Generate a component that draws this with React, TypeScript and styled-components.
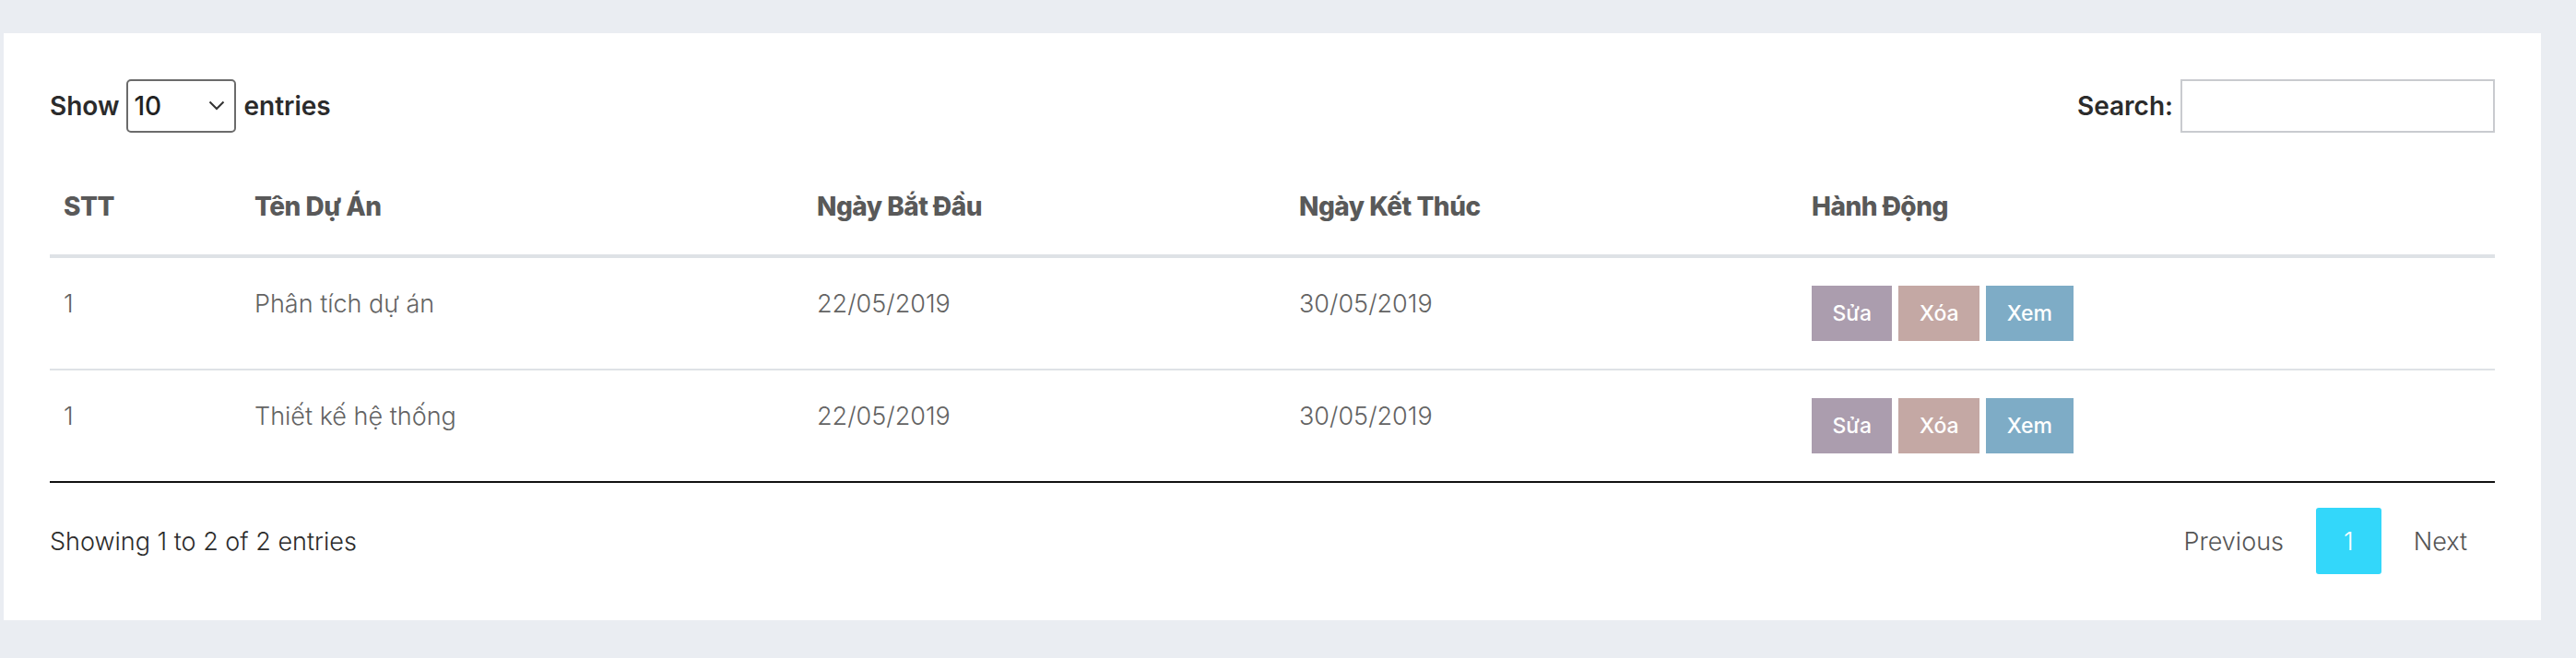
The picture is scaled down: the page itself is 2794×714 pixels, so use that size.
import React from "react";
import styled, { createGlobalStyle } from "styled-components";

const GlobalStyle = createGlobalStyle`
  html, body { margin: 0; padding: 0; background: #eaedf2; }
  body { font-family: Inter, "Noto Sans", sans-serif; }
  * { box-sizing: border-box; }
`;

const Page = styled.div`
  width: 2794px;
  height: 714px;
  padding: 36px 38px 41px 4px;
`;

const Panel = styled.div`
  background: #ffffff;
  height: 637px;
  padding: 50px;
  display: flex;
  flex-direction: column;
`;

const Controls = styled.div`
  display: flex;
  justify-content: space-between;
  align-items: center;
  height: 58px;
`;

const Label = styled.label`
  display: flex;
  align-items: center;
  gap: 8px;
  font-size: 28px;
  font-weight: 600;
  color: #2b2b2b;
`;

const SelectWrap = styled.div`
  position: relative;
  width: 119px;
  height: 58px;
`;

const Select = styled.select`
  appearance: none;
  width: 100%;
  height: 100%;
  border: 2px solid #6b6b6b;
  border-radius: 5px;
  background: #fff;
  font-family: Inter, sans-serif;
  font-size: 28px;
  font-weight: 500;
  color: #222;
  padding: 0 0 0 6px;
`;

const Chevron = styled.svg`
  position: absolute;
  right: 12px;
  top: 23px;
  pointer-events: none;
`;

const SearchInput = styled.input`
  width: 341px;
  height: 58px;
  border: 2px solid #c9cbcf;
  border-radius: 0;
  outline: none;
`;

const Table = styled.table`
  margin-top: 28px;
  width: 100%;
  border-collapse: collapse;
  table-layout: fixed;
  border-bottom: 2px solid #111;
`;

const Th = styled.th`
  text-align: left;
  padding: 30px 15px;
  line-height: 44px;
  font-size: 28px;
  font-weight: 800;
  color: #595959;
  border-bottom: 4px solid #dee2e6;
  vertical-align: bottom;
  letter-spacing: -0.5px;
`;

const Tr = styled.tr`
  & + & td { border-top: 2px solid #dee2e6; }
`;

const Td = styled.td`
  padding: 30px 15px;
  line-height: 40px;
  font-size: 27px;
  font-weight: 300;
  color: #636363;
  vertical-align: top;
`;

const Actions = styled.div`
  display: flex;
  gap: 7px;
`;

const ActionButton = styled.button<{ $bg: string }>`
  height: 60px;
  padding: 0 22.5px;
  border: none;
  border-radius: 0;
  background: ${(p) => p.$bg};
  color: #fff;
  font-family: Inter, sans-serif;
  font-size: 23px;
  font-weight: 500;
`;

const Footer = styled.div`
  margin-top: 27px;
  display: flex;
  justify-content: space-between;
  align-items: center;
  height: 72px;
`;

const Info = styled.div`
  font-size: 27px;
  font-weight: 300;
  color: #2b2b2b;
`;

const Pager = styled.div`
  display: flex;
  align-items: center;
`;

const PageLink = styled.span<{ $active?: boolean }>`
  display: flex;
  align-items: center;
  height: 72px;
  padding: ${(p) => (p.$active ? "0 30px" : "0 35px")};
  font-size: 27px;
  font-weight: 300;
  color: ${(p) => (p.$active ? "#fff" : "#555")};
  background: ${(p) => (p.$active ? "#33d7fa" : "transparent")};
  border-radius: 3px;

  &:last-child {
    padding-right: 30px;
  }
`;

const rows = [
  { stt: "1", name: "Phân tích dự án", start: "22/05/2019", end: "30/05/2019" },
  { stt: "1", name: "Thiết kế hệ thống", start: "22/05/2019", end: "30/05/2019" },
];

export default function App() {
  return (
    <Page>
      <GlobalStyle />
      <Panel>
        <Controls>
          <Label>
            Show
            <SelectWrap>
              <Select defaultValue="10">
                <option value="10">10</option>
                <option value="25">25</option>
                <option value="50">50</option>
                <option value="100">100</option>
              </Select>
              <Chevron width="18" height="11" viewBox="0 0 18 11">
                <path d="M1.5 1.5 L9 9 L16.5 1.5" fill="none" stroke="#333" strokeWidth="2" />
              </Chevron>
            </SelectWrap>
            entries
          </Label>
          <Label>
            Search:
            <SearchInput type="search" />
          </Label>
        </Controls>
        <Table>
          <colgroup>
            <col style={{ width: 207 }} />
            <col style={{ width: 610 }} />
            <col style={{ width: 523 }} />
            <col style={{ width: 556 }} />
            <col />
          </colgroup>
          <thead>
            <tr>
              <Th>STT</Th>
              <Th>Tên Dự Án</Th>
              <Th>Ngày Bắt Đầu</Th>
              <Th>Ngày Kết Thúc</Th>
              <Th>Hành Động</Th>
            </tr>
          </thead>
          <tbody>
            {rows.map((r, i) => (
              <Tr key={i}>
                <Td>{r.stt}</Td>
                <Td>{r.name}</Td>
                <Td>{r.start}</Td>
                <Td>{r.end}</Td>
                <Td>
                  <Actions>
                    <ActionButton $bg="#ab9dae">Sửa</ActionButton>
                    <ActionButton $bg="#c4a8a4">Xóa</ActionButton>
                    <ActionButton $bg="#7eacc6">Xem</ActionButton>
                  </Actions>
                </Td>
              </Tr>
            ))}
          </tbody>
        </Table>
        <Footer>
          <Info>Showing 1 to 2 of 2 entries</Info>
          <Pager>
            <PageLink>Previous</PageLink>
            <PageLink $active>1</PageLink>
            <PageLink>Next</PageLink>
          </Pager>
        </Footer>
      </Panel>
    </Page>
  );
}
